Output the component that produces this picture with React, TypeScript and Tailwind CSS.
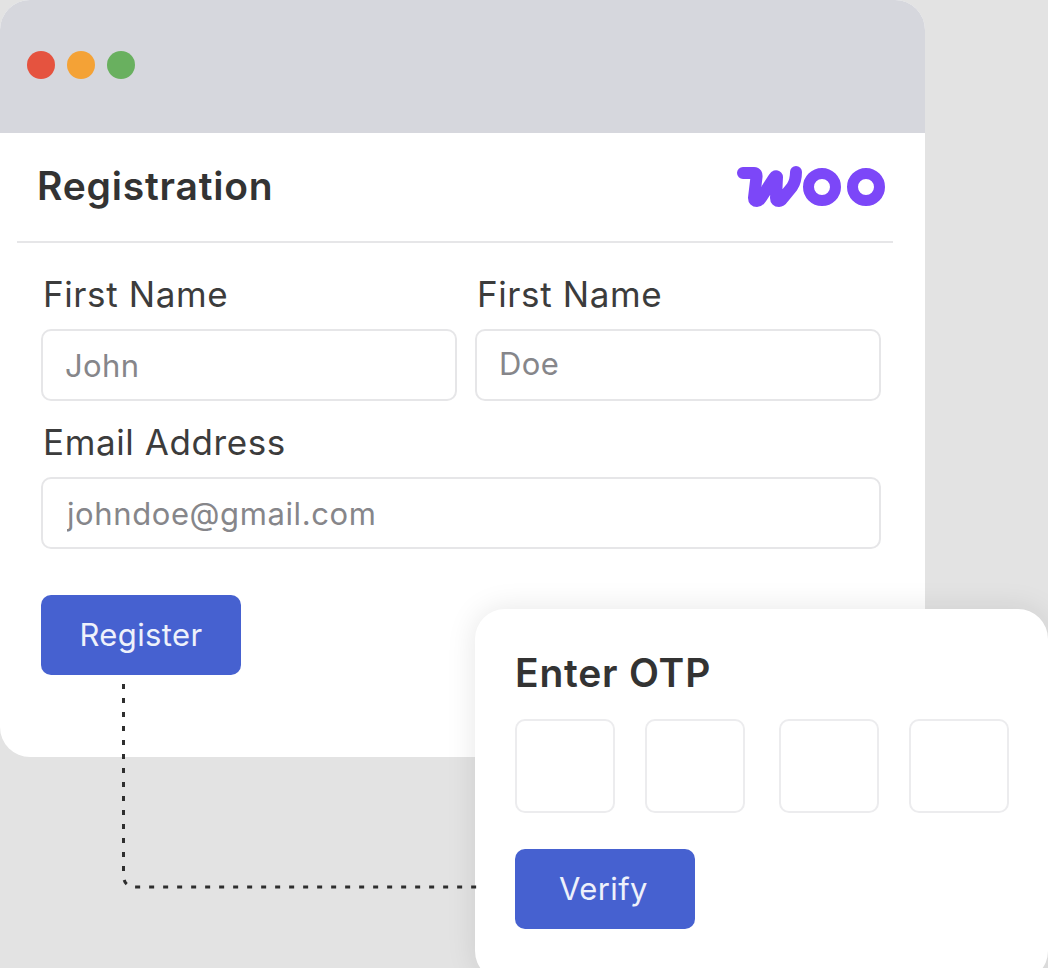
function Field({ label, placeholder, className = "", inputClass = "" }: { label: string; placeholder: string; className?: string; inputClass?: string }) {
  return (
    <div className={`flex flex-col ${className}`}>
      <label className="h-[76px] pt-[18px] pl-[2px] text-[35px] leading-[46px] tracking-[0.6px] text-[#3c3c3c]">{label}</label>
      <input
        readOnly
        placeholder={placeholder}
        className={`h-[72px] w-full rounded-[10px] border-2 border-[#e6e6e8] bg-white text-[31px] text-[#333] outline-none placeholder:text-[#86868a] ${inputClass}`}
      />
    </div>
  );
}

function WooLogo() {
  return (
    <svg width="150" height="44" viewBox="736 164 150 44" fill="none" stroke="#7c47f8" strokeWidth="12" strokeLinecap="round" strokeLinejoin="round">
      <path d="M743 173h11q3 0 2.5 4L754 198q0 3 3 3 2 0 4-3l13-20q2-3 3-1l-1 21q0 3 3 3 2 0 4-3l9-11q4-6 4-15" />
      <circle cx="822" cy="187" r="13.5" strokeWidth="11" />
      <circle cx="866" cy="187" r="13.5" strokeWidth="11" />
    </svg>
  );
}

function OtpBox() {
  return <div className="h-[94px] w-[100px] rounded-[10px] border-2 border-[#ececee] bg-white" />;
}

export default function App() {
  return (
    <div className="relative h-[968px] w-[1048px] overflow-hidden bg-[#e3e3e3] font-['Inter',sans-serif]">
      <div className="h-[757px] w-[925px] overflow-hidden rounded-[30px] bg-white">
        <div className="flex h-[133px] items-center gap-[12px] bg-[#d6d7dd] pb-[4px] pl-[27px]">
          <span className="size-[28px] rounded-full bg-[#e5533f]" />
          <span className="size-[28px] rounded-full bg-[#f4a236]" />
          <span className="size-[28px] rounded-full bg-[#69b05f]" />
        </div>

        <div className="ml-[17px] mr-[32px] flex h-[110px] items-center justify-between border-b-2 border-[#e6e6e8] pb-[2px] pl-[20px] pr-[7px]">
          <h1 className="text-[39px] font-semibold tracking-[0.8px] text-[#333]">Registration</h1>
          <WooLogo />
        </div>

        <div className="px-[41px] pt-[10px]">
          <div className="flex gap-[18px]">
            <Field label="First Name" placeholder="John" className="w-[416px]" inputClass="pl-[22px] tracking-[0.4px]" />
            <Field label="First Name" placeholder="Doe" className="w-[406px]" inputClass="pb-[3px] pl-[22px] tracking-[0.4px]" />
          </div>
          <Field label="Email Address" placeholder="johndoe@gmail.com" className="w-[840px]" inputClass="pl-[24px] tracking-[0.6px]" />
          <button className="mt-[46px] h-[80px] w-[200px] rounded-[10px] bg-[#4661d0] text-[31px] tracking-[0.4px] text-[#eef1fb]">Register</button>
        </div>
      </div>

      <div className="absolute left-[475px] top-[609px] h-[372px] w-[573px] rounded-[30px] bg-white pl-[40px] shadow-[0_0_30px_rgba(0,0,0,0.1)]">
        <h2 className="mt-[40px] text-[39px] font-semibold leading-[48px] tracking-[0.8px] text-[#333]">Enter OTP</h2>
        <div className="mt-[22px] flex">
          <OtpBox />
          <div className="w-[30px]" />
          <OtpBox />
          <div className="w-[34px]" />
          <OtpBox />
          <div className="w-[30px]" />
          <OtpBox />
        </div>
        <button className="mt-[36px] h-[80px] w-[180px] rounded-[10px] bg-[#4661d0] pr-[3px] text-[31px] tracking-[0.4px] text-[#eef1fb]">Verify</button>
      </div>

      {/* dotted line from Register to Verify */}
      <svg className="absolute left-0 top-0" width="1048" height="968" fill="none" stroke="#2e2e2e" strokeWidth="3" strokeDasharray="5 9">
        <path d="M123.5 684V875q0 12 12 12H479" />
      </svg>
    </div>
  );
}
